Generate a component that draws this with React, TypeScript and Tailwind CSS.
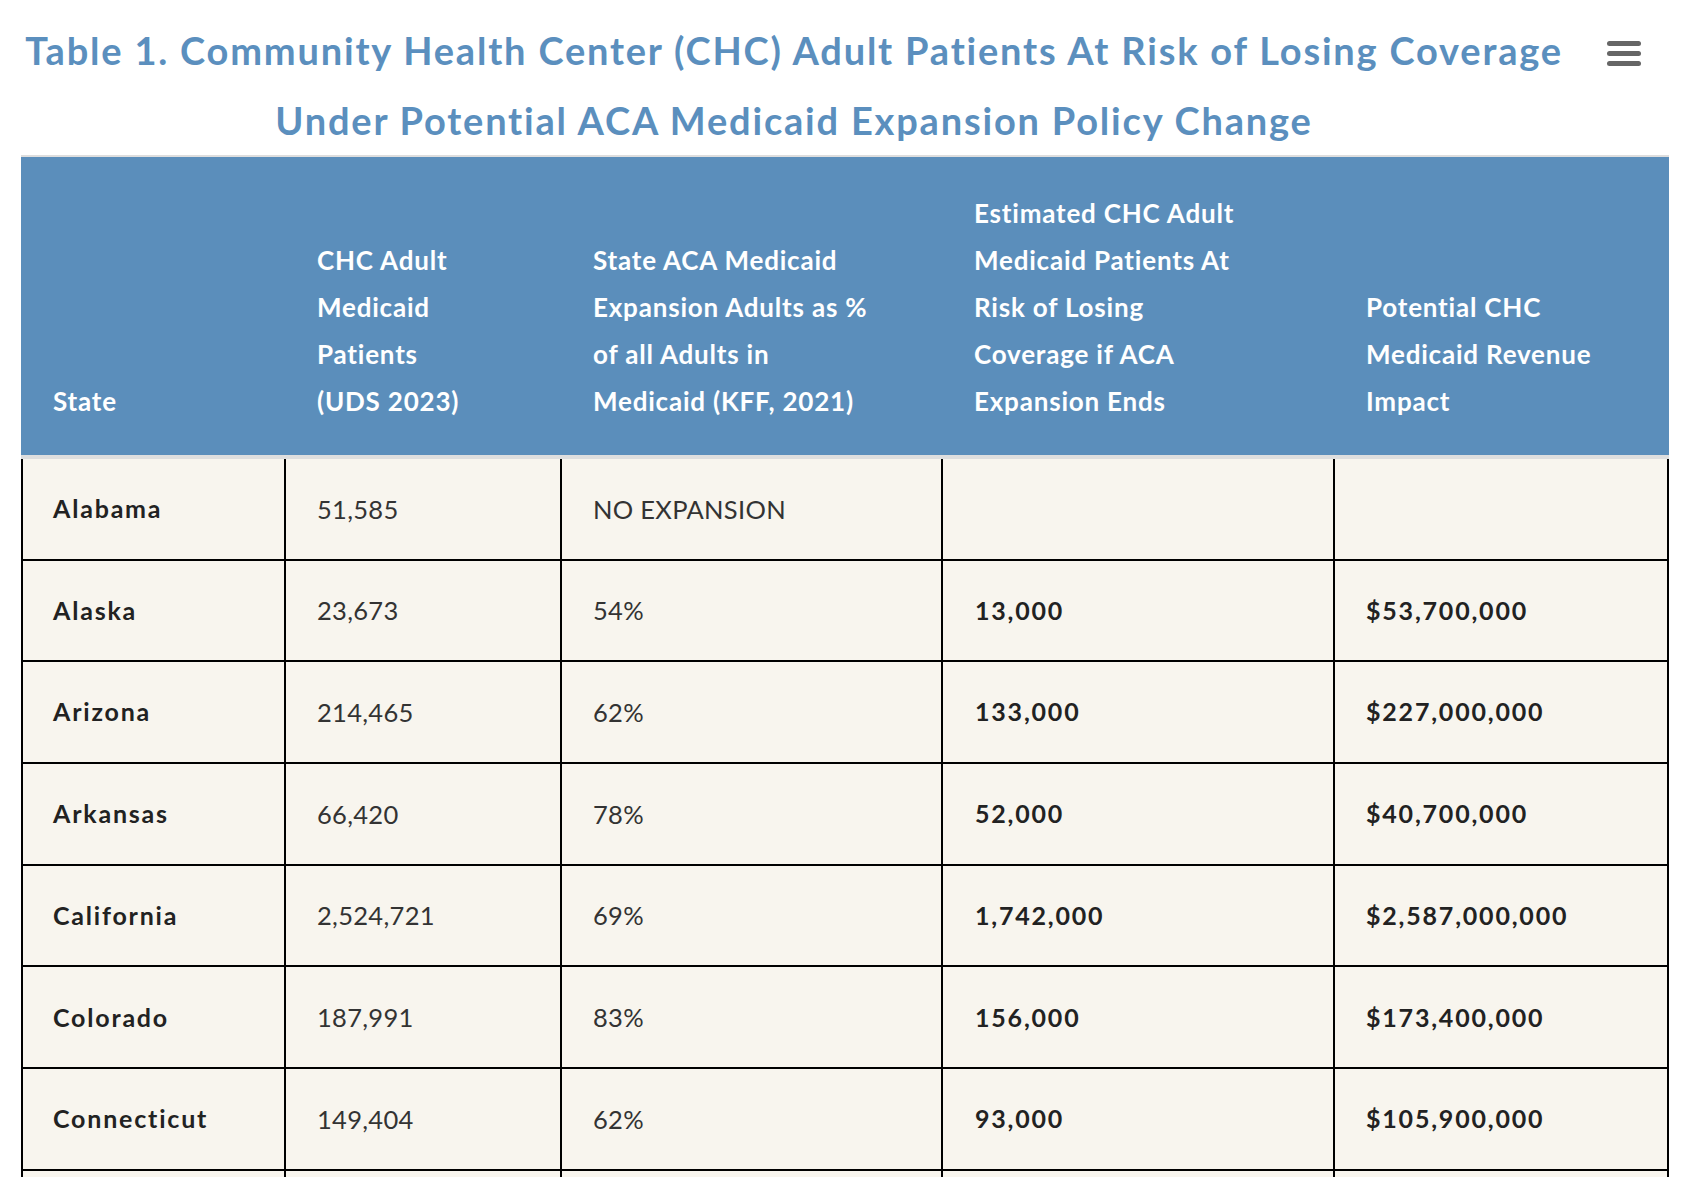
import { Fragment } from 'react';

type Row = {
  state: string;
  patients: string;
  share: string;
  atRisk: string;
  revenue: string;
};

const rows: Row[] = [
  { state: 'Alabama', patients: '51,585', share: 'NO EXPANSION', atRisk: '', revenue: '' },
  { state: 'Alaska', patients: '23,673', share: '54%', atRisk: '13,000', revenue: '$53,700,000' },
  { state: 'Arizona', patients: '214,465', share: '62%', atRisk: '133,000', revenue: '$227,000,000' },
  { state: 'Arkansas', patients: '66,420', share: '78%', atRisk: '52,000', revenue: '$40,700,000' },
  { state: 'California', patients: '2,524,721', share: '69%', atRisk: '1,742,000', revenue: '$2,587,000,000' },
  { state: 'Colorado', patients: '187,991', share: '83%', atRisk: '156,000', revenue: '$173,400,000' },
  { state: 'Connecticut', patients: '149,404', share: '62%', atRisk: '93,000', revenue: '$105,900,000' },
  { state: 'Delaware', patients: '', share: '', atRisk: '', revenue: '' },
];

// header labels, broken the way the original wraps them
const headers: string[][] = [
  ['State'],
  ['CHC Adult', 'Medicaid', 'Patients', '(UDS 2023)'],
  ['State ACA Medicaid', 'Expansion Adults as %', 'of all Adults in', 'Medicaid (KFF, 2021)'],
  ['Estimated CHC Adult', 'Medicaid Patients At', 'Risk of Losing', 'Coverage if ACA', 'Expansion Ends'],
  ['Potential CHC', 'Medicaid Revenue', 'Impact'],
];

const font = { fontFamily: 'Lato, "Open Sans", sans-serif' };

const App = () => {
  return (
    <div className="min-h-screen bg-white" style={font}>
      <div className="flex items-start">
        <h1 className="w-[1588px] pt-[15px] text-center text-[38px] leading-[70px] font-bold tracking-[1.8px] text-[#5b8fbe]">
          Table 1. Community Health Center (CHC) Adult Patients At Risk of Losing Coverage
          <br />
          Under Potential ACA Medicaid Expansion Policy Change
        </h1>
        <button className="ml-[19px] mt-[28px] flex w-[34px] flex-col gap-[5px] py-[13px]" aria-label="Chart menu">
          <span className="h-[5px] w-full rounded-full bg-[#666]" />
          <span className="h-[5px] w-full rounded-full bg-[#666]" />
          <span className="h-[5px] w-full rounded-full bg-[#666]" />
        </button>
      </div>

      <table className="ml-[21px] w-[1648px] table-fixed border-separate border-spacing-0">
        <colgroup>
          <col className="w-[265px]" />
          <col className="w-[276px]" />
          <col className="w-[381px]" />
          <col className="w-[392px]" />
          <col className="w-[334px]" />
        </colgroup>
        <thead>
          <tr className="bg-[#5b8ebb]">
            {headers.map((lines, i) => (
              <th
                key={i}
                className={`whitespace-nowrap border-t-2 border-b-4 border-[#dedede] pt-[33px] pb-[30px] pr-2 text-left align-bottom text-[26px] leading-[47px] font-bold tracking-[0.8px] text-white ${
                  i === 0 ? 'pl-[32px]' : 'pl-[31px]'
                }`}
              >
                {lines.map((l, j) => (
                  <Fragment key={j}>
                    {j > 0 && <br />}
                    {l}
                  </Fragment>
                ))}
              </th>
            ))}
          </tr>
        </thead>
        <tbody className="bg-[#f8f5ee] text-[#222]">
          {rows.map((r) => (
            <tr key={r.state}>
              <td className="h-[101.7px] border-b-2 border-l-2 border-r-2 border-black pl-[30px] text-[25px] font-bold tracking-[1.8px]">
                {r.state}
              </td>
              <td className="border-b-2 border-r-2 border-black pl-[31px] text-[25.5px] font-normal tracking-[0.3px] text-[#333]">
                {r.patients}
              </td>
              <td className="border-b-2 border-r-2 border-black pl-[31px] text-[25.5px] font-normal tracking-[0.3px] text-[#333]">
                {r.share}
              </td>
              <td className="border-b-2 border-r-2 border-black pl-[32px] text-[25px] font-bold tracking-[1.8px]">
                {r.atRisk}
              </td>
              <td className="border-b-2 border-r-2 border-black pl-[31px] text-[25px] font-bold tracking-[1.8px]">
                {r.revenue}
              </td>
            </tr>
          ))}
        </tbody>
      </table>
    </div>
  );
};

export default App;
